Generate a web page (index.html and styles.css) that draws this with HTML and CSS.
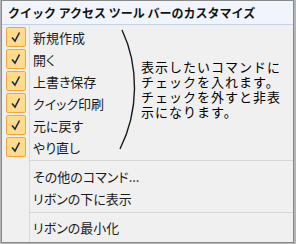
FILE: index.html
```html
<!DOCTYPE html>
<html lang="ja">
<head>
<meta charset="utf-8">
<title>クイック アクセス ツール バーのカスタマイズ</title>
<link rel="stylesheet" href="styles.css">
</head>
<body>
<div class="menu">
  <div class="menu-header">クイック アクセス ツール バーのカスタマイズ</div>
  <div class="menu-body">
    <div class="checks">
      <ul class="checklist">
        <li class="item"><span class="check"><svg viewBox="0 0 18 18" width="18" height="18"><path d="M5 9.5 L8 13 L12.5 4.5" /></svg></span><span class="label">新規作成</span></li>
        <li class="item"><span class="check"><svg viewBox="0 0 18 18" width="18" height="18"><path d="M5 9.5 L8 13 L12.5 4.5" /></svg></span><span class="label">開く</span></li>
        <li class="item"><span class="check"><svg viewBox="0 0 18 18" width="18" height="18"><path d="M5 9.5 L8 13 L12.5 4.5" /></svg></span><span class="label">上書き保存</span></li>
        <li class="item"><span class="check"><svg viewBox="0 0 18 18" width="18" height="18"><path d="M5 9.5 L8 13 L12.5 4.5" /></svg></span><span class="label">クイック印刷</span></li>
        <li class="item"><span class="check"><svg viewBox="0 0 18 18" width="18" height="18"><path d="M5 9.5 L8 13 L12.5 4.5" /></svg></span><span class="label">元に戻す</span></li>
        <li class="item"><span class="check"><svg viewBox="0 0 18 18" width="18" height="18"><path d="M5 9.5 L8 13 L12.5 4.5" /></svg></span><span class="label">やり直し</span></li>
      </ul>
      <svg class="brace" viewBox="0 0 24 132" width="24" height="132"><path d="M5 4 C 22 40, 22 85, 3 123" /></svg>
      <div class="note">
        <span class="note-line">表示したいコマンドに</span>
        <span class="note-line">チェックを入れます。</span>
        <span class="note-line">チェックを外すと非表</span>
        <span class="note-line">示になります。</span>
      </div>
    </div>
    <div class="sep sep-first"></div>
    <ul class="plainlist">
      <li class="plain">その他のコマンド...</li>
      <li class="plain">リボンの下に表示</li>
    </ul>
    <div class="sep sep-second"></div>
    <ul class="plainlist">
      <li class="plain">リボンの最小化</li>
    </ul>
  </div>
</div>
</body>
</html>
```
FILE: styles.css
```css
html {
  background: #b4b4b4;
}
body {
  margin: 0;
  font-family: "Noto Sans CJK JP", "Noto Sans", sans-serif;
  color: #1b1b1b;
}
ul {
  list-style: none;
  margin: 0;
  padding: 0;
}
.menu {
  margin-left: 1px;
  width: 293px;
  height: 243px;
  box-sizing: border-box;
  border: 1px solid #8a8a8a;
  background: #f0f0f0;
  display: flex;
  flex-direction: column;
}
.menu-header {
  height: 23px;
  line-height: 23px;
  border-bottom: 1px solid #c3d3e8;
  background: #f1f5fb;
  padding-left: 6px;
  font-size: 12px;
  font-weight: bold;
  color: #141414;
  white-space: nowrap;
}
.menu-body {
  flex: 1;
  padding-top: 1px;
  background: linear-gradient(to right, transparent 27px, #dadada 27px, #dadada 28px, transparent 28px);
}
.checks {
  display: flex;
}
.checklist {
  width: 115px;
}
.item {
  display: flex;
  align-items: center;
  height: 22px;
}
.check {
  width: 20px;
  height: 20px;
  box-sizing: border-box;
  margin-left: 4px;
  margin-right: 7px;
  border: 1px solid #f2a440;
  border-radius: 2px;
  background: #fddd8c;
  display: flex;
  align-items: center;
  justify-content: center;
}
.check path {
  fill: none;
  stroke: #1d2850;
  stroke-width: 1.6;
}
.label,
.plain {
  font-size: 13px;
  font-feature-settings: "palt";
  white-space: nowrap;
}
.brace path {
  fill: none;
  stroke: #1a1a1a;
  stroke-width: 1.4;
}
.note {
  margin-top: 34px;
  display: flex;
  flex-direction: column;
}
.note-line {
  display: block;
  height: 15px;
  font-size: 13px;
  letter-spacing: 1px;
  line-height: 13px;
  color: #000;
  white-space: nowrap;
}
.sep {
  height: 1px;
  margin-left: 27px;
  background: #d6d6d6;
}
.sep-first {
  margin-top: 2px;
  margin-bottom: 5px;
}
.sep-second {
  margin-top: 2px;
  margin-bottom: 4px;
}
.plain {
  height: 22px;
  line-height: 22px;
  padding-left: 31px;
}
```
